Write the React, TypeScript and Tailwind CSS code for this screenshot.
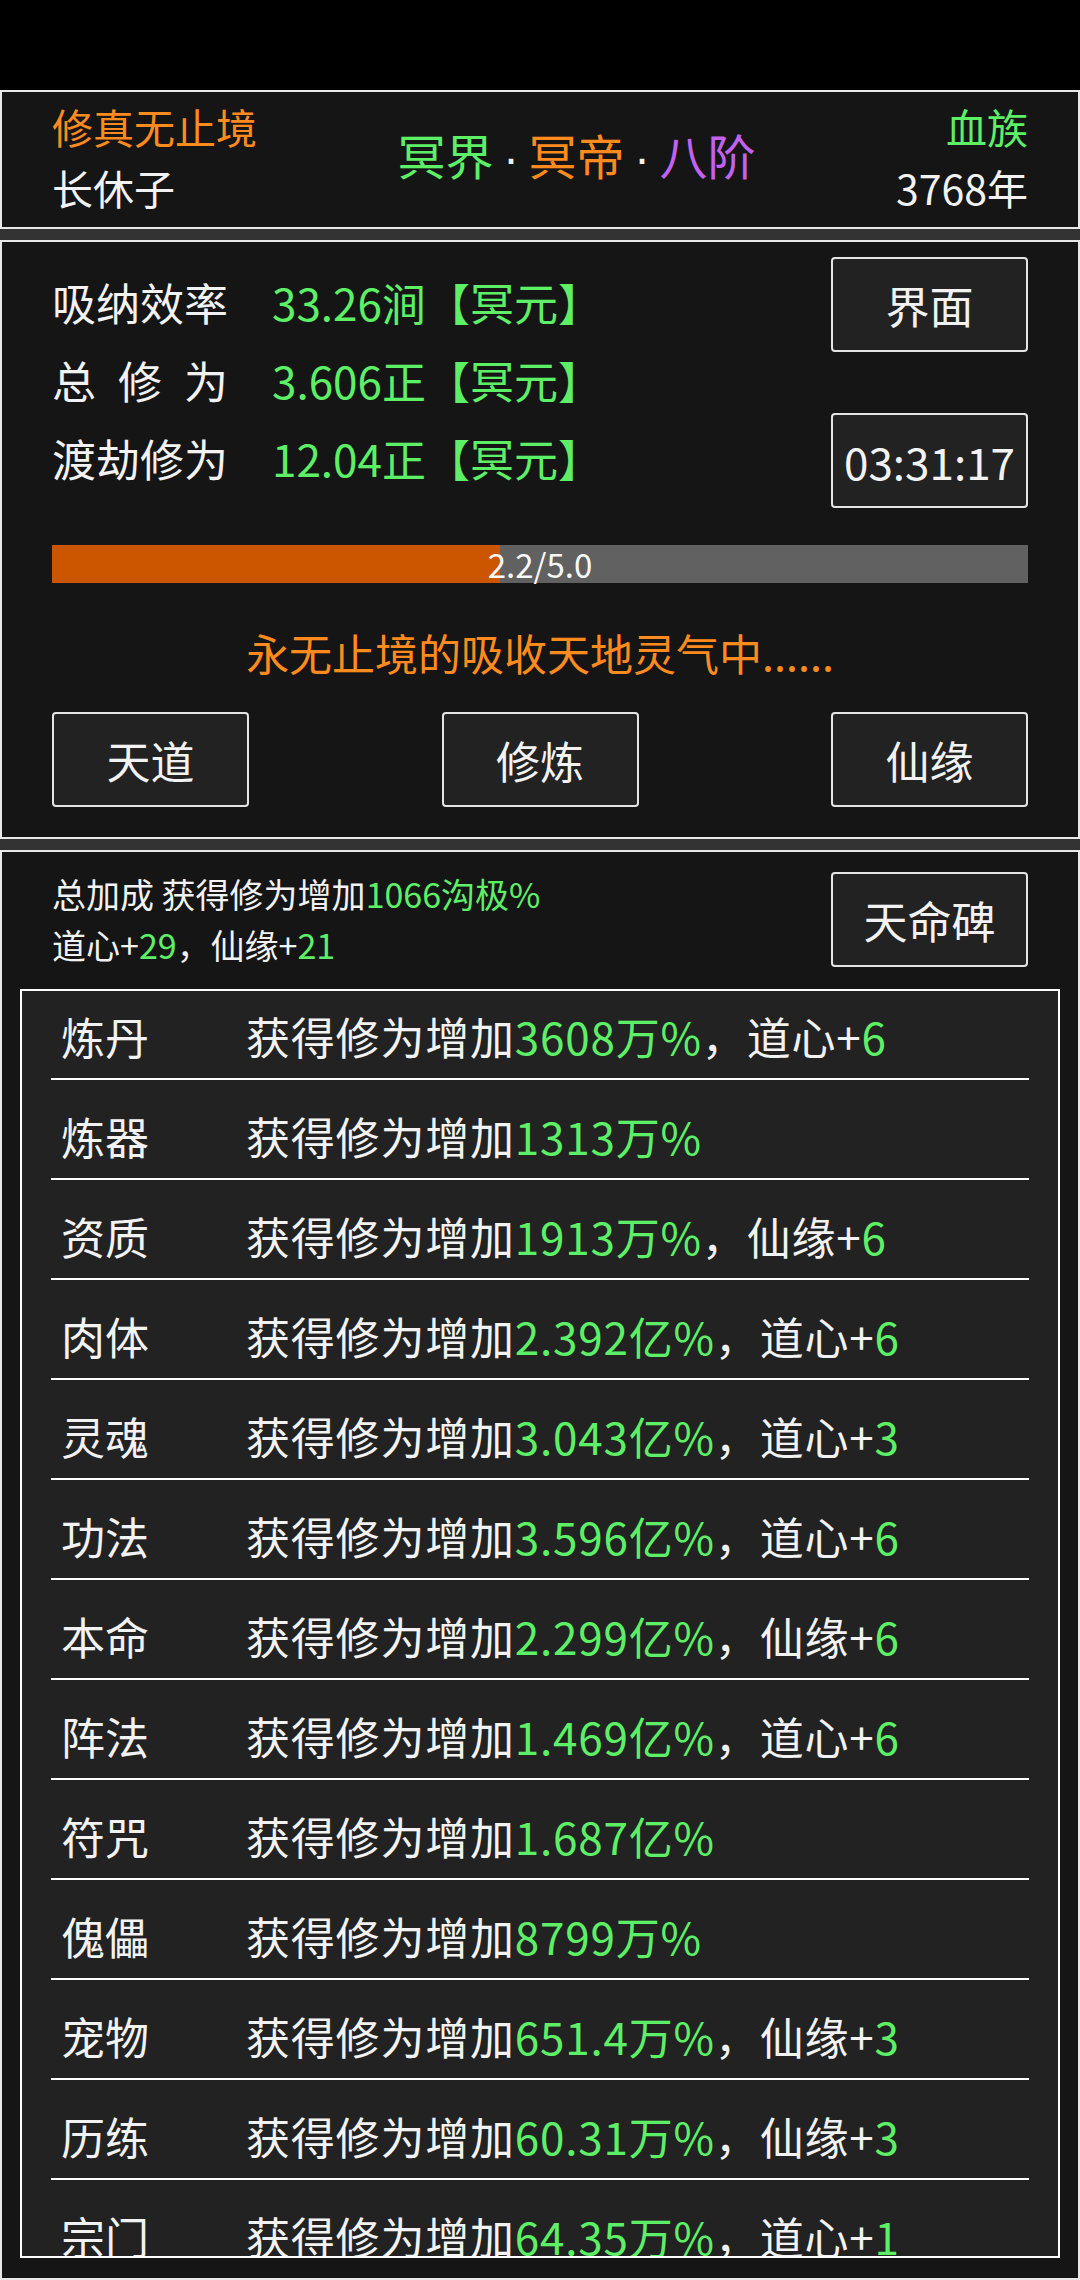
import React from "react";

const rows: { name: string; value: string; extra?: string; extraNum?: string }[] = [
  { name: "炼丹", value: "3608万%", extra: "道心+", extraNum: "6" },
  { name: "炼器", value: "1313万%" },
  { name: "资质", value: "1913万%", extra: "仙缘+", extraNum: "6" },
  { name: "肉体", value: "2.392亿%", extra: "道心+", extraNum: "6" },
  { name: "灵魂", value: "3.043亿%", extra: "道心+", extraNum: "3" },
  { name: "功法", value: "3.596亿%", extra: "道心+", extraNum: "6" },
  { name: "本命", value: "2.299亿%", extra: "仙缘+", extraNum: "6" },
  { name: "阵法", value: "1.469亿%", extra: "道心+", extraNum: "6" },
  { name: "符咒", value: "1.687亿%" },
  { name: "傀儡", value: "8799万%" },
  { name: "宠物", value: "651.4万%", extra: "仙缘+", extraNum: "3" },
  { name: "历练", value: "60.31万%", extra: "仙缘+", extraNum: "3" },
  { name: "宗门", value: "64.35万%", extra: "道心+", extraNum: "1" },
];

function Btn({ children, className = "" }: { children: React.ReactNode; className?: string }) {
  return (
    <div
      className={`flex h-[95px] w-[197px] items-center justify-center rounded-[4px] border-2 border-[#e4e4e4] bg-[#222222] text-[44px] text-[#f2f2f2] ${className}`}
    >
      {children}
    </div>
  );
}

function StatRow({ label, value }: { label: React.ReactNode; value: string }) {
  return (
    <div className="flex h-[78px] items-center">
      <div className="w-[220px] text-[#f2f2f2]">{label}</div>
      <div className="text-[#5df067]">{value}</div>
    </div>
  );
}

function Dot() {
  return <span className="inline-block w-[35px] text-center font-['Liberation_Sans',sans-serif] text-[#f2f2f2]">·</span>;
}

export default function App() {
  return (
    <div className="flex h-[2280px] w-[1080px] flex-col overflow-hidden bg-black font-['Noto_Sans_CJK_SC','Noto_Sans',sans-serif]">
      <div className="h-[90px] shrink-0" />

      {/* header */}
      <div className="flex h-[139px] shrink-0 items-center border-2 border-[#e8e8e8] bg-[#151515] px-[50px] pb-[6px]">
        <div className="flex flex-col text-[41px] leading-[61px]">
          <span className="text-[#ff8a1e]">修真无止境</span>
          <span className="text-[#f2f2f2]">长休子</span>
        </div>
        <div className="flex-1 text-center text-[48px]">
          <span className="text-[#5df067]">冥界</span>
          <Dot />
          <span className="text-[#ff8a1e]">冥帝</span>
          <Dot />
          <span className="text-[#c262f0]">八阶</span>
        </div>
        <div className="flex flex-col items-end text-[41px] leading-[61px]">
          <span className="text-[#5df067]">血族</span>
          <span className="text-[#f2f2f2]">3768年</span>
        </div>
      </div>

      <div className="h-[11px] shrink-0 bg-[#333333]" />

      {/* cultivation panel */}
      <div className="shrink-0 border-2 border-[#e8e8e8] bg-[#151515] px-[50px] pb-[30px] pt-[15px]">
        <div className="flex items-start justify-between">
          <div className="mt-[6px] text-[44px]">
            <StatRow label="吸纳效率" value="33.26涧【冥元】" />
            <StatRow
              label={
                <span className="flex w-[176px] justify-between">
                  <span>总</span>
                  <span>修</span>
                  <span>为</span>
                </span>
              }
              value="3.606正【冥元】"
            />
            <StatRow label="渡劫修为" value="12.04正【冥元】" />
          </div>
          <div className="flex flex-col gap-[61px]">
            <Btn>界面</Btn>
            <Btn>03:31:17</Btn>
          </div>
        </div>

        <div className="relative mt-[37px] h-[38px] bg-[#616161]">
          <div className="h-full w-[448px] bg-[#cc5500]" />
          <div className="absolute inset-0 flex items-center justify-center text-[33px] leading-none text-[#f8f8f8]">
            2.2/5.0
          </div>
        </div>

        <div className="mt-[45px] h-[52px] text-center text-[43px] leading-[48px] text-[#ff8a1e]">
          永无止境的吸收天地灵气中......
        </div>

        <div className="mt-[32px] flex justify-between">
          <Btn className="w-[195px]">天道</Btn>
          <Btn className="w-[195px]">修炼</Btn>
          <Btn>仙缘</Btn>
        </div>
      </div>

      <div className="h-[11px] shrink-0 bg-[#333333]" />

      {/* bonus panel */}
      <div className="flex-1 border-2 border-[#e8e8e8] bg-[#151515]">
        <div className="flex items-start justify-between px-[50px]">
          <div className="mt-[16px] text-[34px] leading-[51px] text-[#f2f2f2]">
            <div>
              总加成 获得修为增加<span className="text-[#5df067]">1066沟极%</span>
            </div>
            <div>
              道心+<span className="text-[#5df067]">29</span>，仙缘+
              <span className="text-[#5df067]">21</span>
            </div>
          </div>
          <Btn className="mt-[20px]">天命碑</Btn>
        </div>

        <div className="mx-[18px] mt-[19px] h-[1269px] overflow-hidden border-2 border-white bg-[#222222]">
          <div className="-mt-[11px] px-[29px]">
            {rows.map((r) => (
              <div
                key={r.name}
                className="flex h-[100px] border-b-2 border-white pt-[34px] text-[44px] leading-[44px] text-[#f2f2f2]"
              >
                <div className="w-[195px] pl-[10px]">{r.name}</div>
                <div className="tracking-[0.8px]">
                  获得修为增加<span className="text-[#5df067]">{r.value}</span>
                  {r.extra && (
                    <>
                      ，{r.extra}
                      <span className="text-[#5df067]">{r.extraNum}</span>
                    </>
                  )}
                </div>
              </div>
            ))}
          </div>
        </div>
      </div>
    </div>
  );
}
